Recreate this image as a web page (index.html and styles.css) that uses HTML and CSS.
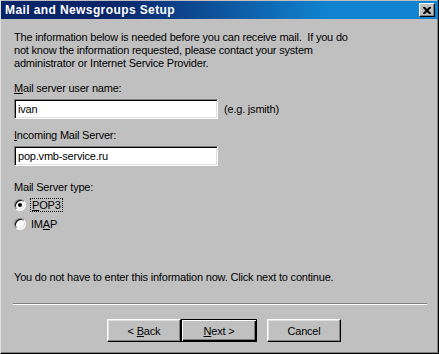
FILE: index.html
```html
<!DOCTYPE html>
<html lang="en">
<head>
    <meta charset="UTF-8">
    <title>Mail and Newsgroups Setup</title>
    <link rel="stylesheet" href="styles.css">
</head>
<body>
    <div class="window">
        <div class="titlebar">
            <span class="title">Mail and Newsgroups Setup</span>
            <span class="close">
                <svg width="8" height="7" viewBox="0 0 8 7">
                    <path d="M0 0h2l2 2 2-2h2v1l-2.5 2.5L8 6v1H6L4 5 2 7H0V6l2.5-2.5L0 1z" fill="#000"/>
                </svg>
            </span>
        </div>

        <div class="content">
            <p class="intro">The information below is needed before you can receive mail.  If you do<br>not know the information requested, please contact your system<br>administrator or Internet Service Provider.</p>

            <div class="field">
                <div class="label"><u>M</u>ail server user name:</div>
                <div class="row">
                    <div class="textbox">ivan</div>
                    <span class="hint">(e.g. jsmith)</span>
                </div>
            </div>

            <div class="field">
                <div class="label"><u>I</u>ncoming Mail Server:</div>
                <div class="row">
                    <div class="textbox">pop.vmb-service.ru</div>
                </div>
            </div>

            <div class="field type">
                <div class="label">Mail Server type:</div>
                <div class="radio first">
                    <span class="dot checked"></span>
                    <span class="focus"><u>P</u>OP3</span>
                </div>
                <div class="radio">
                    <span class="dot"></span>
                    <span>IM<u>A</u>P</span>
                </div>
            </div>

            <p class="note">You do not have to enter this information now. Click next to continue.</p>
        </div>

        <div class="separator"></div>

        <div class="buttons">
            <span class="btn"><span>&lt; <u>B</u>ack</span></span>
            <span class="btn default"><span><u>N</u>ext &gt;</span></span>
            <span class="btn cancel">Cancel</span>
        </div>
    </div>
</body>
</html>
```

FILE: styles.css
```css
body {
    margin: 0;
    font-family: "Liberation Sans", Arial, sans-serif;
    font-size: 11px;
    letter-spacing: -0.2px;
    color: #000;
    background: #c0c0c0;
}
.window {
    width: 439px;
    height: 354px;
    box-sizing: border-box;
    background: #c0c0c0;
    border-left: 1px solid #dfdfdf;
    border-right: 1px solid #000;
    border-bottom: 1px solid #000;
    box-shadow: inset -1px -1px 0 #808080;
    display: flex;
    flex-direction: column;
}
.titlebar {
    height: 18px;
    margin-top: 1px;
    background: linear-gradient(to right, #0a246a 0%, #0a246a 25%, #1084d0 75%, #1084d0 100%);
    display: flex;
    align-items: center;
    justify-content: space-between;
    padding: 0 3px 0 4px;
}
.title {
    color: #fff;
    font-weight: bold;
    font-size: 12px;
    letter-spacing: 0.4px;
}
.close {
    width: 16px;
    height: 14px;
    box-sizing: border-box;
    background: #c0c0c0;
    border: 1px solid;
    border-color: #fff #000 #000 #fff;
    box-shadow: inset -1px -1px 0 #808080;
    display: flex;
    align-items: center;
    justify-content: center;
}
.content {
    padding: 12px 0 0 13px;
}
.intro {
    margin: 0;
    line-height: 13px;
    white-space: pre-wrap;
}
.field {
    margin-top: 12px;
}
.field + .field {
    margin-top: 10px;
}
.label {
    line-height: 13px;
}
.row {
    display: flex;
    align-items: center;
    margin-top: 4px;
}
.textbox {
    width: 204px;
    height: 20px;
    box-sizing: border-box;
    background: #fff;
    border: 1px solid;
    border-color: #808080 #fff #fff #808080;
    box-shadow: inset 1px 1px 0 #000, inset -1px -1px 0 #dfdfdf;
    padding: 3px 0 0 3px;
    line-height: 13px;
}
.hint {
    margin-left: 6px;
}
.field.type {
    margin-top: 15px;
}
.radio {
    display: flex;
    align-items: center;
    height: 19px;
    gap: 5px;
}
.radio.first {
    margin-top: 1px;
}
.dot {
    width: 12px;
    height: 12px;
    box-sizing: border-box;
    border-radius: 50%;
    background: #fff;
    border: 1px solid;
    border-color: #808080 #fff #fff #808080;
    box-shadow: inset 1px 1px 0 #000, inset -1px -1px 0 #dfdfdf;
    position: relative;
}
.dot.checked::after {
    content: "";
    position: absolute;
    left: 3px;
    top: 3px;
    width: 4px;
    height: 4px;
    border-radius: 50%;
    background: #000;
}
.focus {
    outline: 1px dotted #000;
    padding: 0 1px;
}
.note {
    margin: 38px 0 0;
    line-height: 13px;
}
.separator {
    margin: 19px 11px 0 12px;
    height: 1px;
    border-top: 1px solid #808080;
    background: #fff;
}
.buttons {
    display: flex;
    margin: 14px 0 0 106px;
}
.btn {
    width: 74px;
    height: 23px;
    box-sizing: border-box;
    display: flex;
    align-items: center;
    justify-content: center;
    border: 1px solid;
    border-color: #fff #000 #000 #fff;
    box-shadow: inset -1px -1px 0 #808080, inset 1px 1px 0 #dfdfdf;
}
.btn.default {
    width: 76px;
    border: 1px solid #000;
    box-shadow: inset 1px 1px 0 #fff, inset -1px -1px 0 #000, inset -2px -2px 0 #808080;
}
.btn.cancel {
    margin-left: 10px;
}
```
